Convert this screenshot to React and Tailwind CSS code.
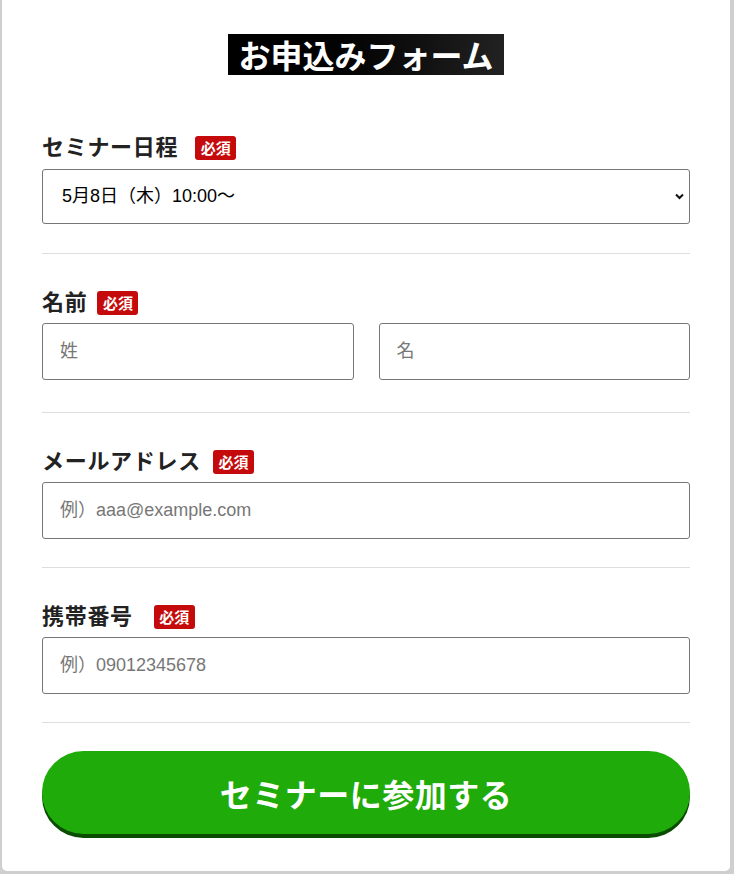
import { useState } from "react"

const jp = { fontFamily: '"Noto Sans CJK JP", "Noto Sans", sans-serif' }
const mixed = { fontFamily: '"Liberation Sans", "Noto Sans CJK JP", sans-serif' }

function Required({ className = "" }) {
  return (
    <span
      className={`inline-flex h-[24px] w-[41px] items-center justify-center rounded-[3px] bg-[#c40a0a] text-[15px] font-bold leading-none text-white ${className}`}
    >
      必須
    </span>
  )
}

function Label({ children, gap }) {
  return (
    <div className="flex h-[32px] items-center">
      <span className="-mt-[2px] text-[22px] font-bold leading-[32px] tracking-[0.7px] text-[#222]">{children}</span>
      <Required className={`mt-[3px] ${gap}`} />
    </div>
  )
}

function TextInput({ placeholder }) {
  return (
    <input
      type="text"
      placeholder={placeholder}
      style={mixed}
      className="h-[57px] w-full rounded-[3px] border border-[#767676] bg-white px-[17px] text-[18px] text-[#222] outline-none placeholder:text-[#777]"
    />
  )
}

export default function App() {
  const [date, setDate] = useState("0508")

  return (
    <div className="min-h-[874px] bg-[#cfcfcf]" style={jp}>
      <div className="ml-[2px] w-[728px] rounded-b-[5px] bg-white px-[40px] pt-[34px] pb-[33px]">
        {/* Title */}
        <div className="flex justify-center">
          <h1 className="bg-gradient-to-r from-[#000] to-[#222] px-[10px] text-[32px] font-bold leading-[41px] text-white">
            お申込みフォーム
          </h1>
        </div>

        {/* Seminar date */}
        <div className="border-b border-[#ddd] pt-[55px] pb-[29px]">
          <Label gap="ml-[17px]">セミナー日程</Label>
          <div className="relative mt-[7px]">
            <select
              value={date}
              onChange={(e) => setDate(e.target.value)}
              style={mixed}
              className="h-[55px] w-full appearance-none rounded-[3px] border border-[#767676] bg-white pl-[19px] text-[18px] text-black outline-none"
            >
              <option value="0508">5月8日（木）10:00～</option>
              <option value="0515">5月15日（木）10:00～</option>
            </select>
            <svg
              className="pointer-events-none absolute right-[6px] top-[24px]"
              width="9"
              height="7"
              viewBox="0 0 9 7"
            >
              <path d="M1 1.5 L4.5 5 L8 1.5" fill="none" stroke="#111" strokeWidth="2" />
            </svg>
          </div>
        </div>

        {/* Name */}
        <div className="border-b border-[#ddd] pt-[31px] pb-[32px]">
          <Label gap="ml-[10px]">名前</Label>
          <div className="mt-[6px] grid grid-cols-2 gap-[25px]">
            <TextInput placeholder="姓" />
            <TextInput placeholder="名" />
          </div>
        </div>

        {/* Email */}
        <div className="border-b border-[#ddd] pt-[31px] pb-[28px]">
          <Label gap="ml-[12px]">メールアドレス</Label>
          <div className="mt-[6px]">
            <TextInput placeholder="例）aaa@example.com" />
          </div>
        </div>

        {/* Phone */}
        <div className="border-b border-[#ddd] pt-[31px] pb-[28px]">
          <Label gap="ml-[21px]">携帯番号</Label>
          <div className="mt-[6px]">
            <TextInput placeholder="例）09012345678" />
          </div>
        </div>

        {/* Submit */}
        <div className="pt-[28px]">
          <button
            type="button"
            className="flex h-[83px] w-full items-center justify-center rounded-full bg-[#1fab0a] text-[32px] font-bold tracking-[0.5px] text-white shadow-[0_4px_0_#0a4d00]"
          >
            セミナーに参加する
          </button>
        </div>
        <div className="h-[4px]" />
      </div>
    </div>
  )
}
